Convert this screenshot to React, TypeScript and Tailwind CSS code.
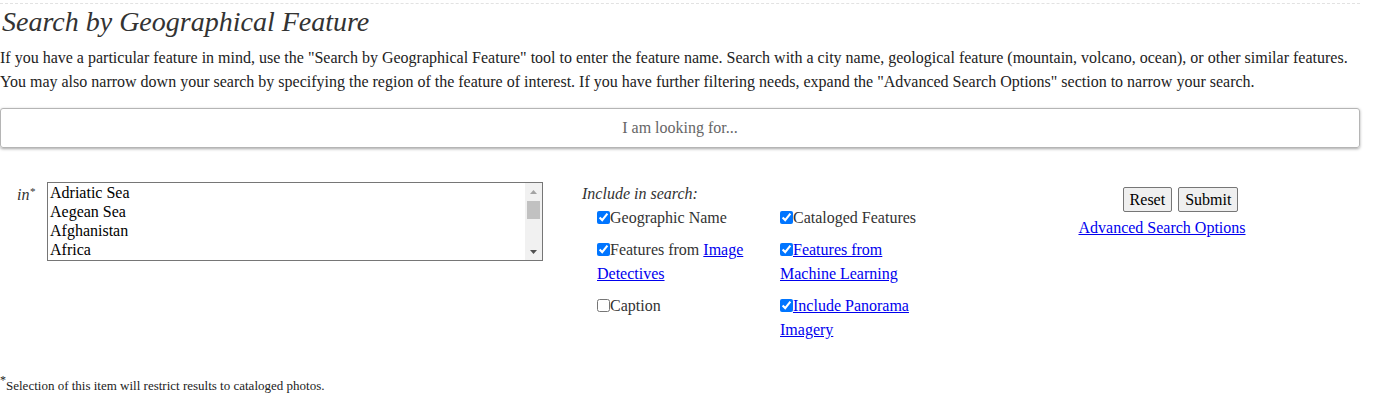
import { useState } from 'react';

const regions = ['Adriatic Sea', 'Aegean Sea', 'Afghanistan', 'Africa'];

function Check({
  checked,
  children,
}: {
  checked: boolean;
  children: React.ReactNode;
}) {
  const [on, setOn] = useState(checked);
  return (
    <label className="block w-[160px] leading-[24px]">
      <input
        type="checkbox"
        checked={on}
        onChange={() => setOn(!on)}
        className="m-0 h-[13px] w-[13px] align-[-1px]"
      />
      {children}
    </label>
  );
}

// list box with a classic windows-style scrollbar
function RegionList() {
  const [sel, setSel] = useState<string | null>(null);
  return (
    <div
      role="listbox"
      className="flex h-[79px] w-[496px] border border-[#767676] bg-white text-[16px] text-black"
    >
      <div className="flex-1 overflow-hidden">
        {regions.map((r) => (
          <div
            key={r}
            role="option"
            onClick={() => setSel(r)}
            className={`h-[19px] px-[2px] leading-[19px] ${sel === r ? 'bg-[#cecece]' : ''}`}
          >
            {r}
          </div>
        ))}
      </div>
      <div className="flex w-[17px] flex-col bg-[#f1f1f1]">
        <div className="flex h-[17px] items-center justify-center">
          <svg width="7" height="4" viewBox="0 0 7 4">
            <path d="M3.5 0 L7 4 L0 4 Z" fill="#a3a3a3" />
          </svg>
        </div>
        <div className="mx-[2px] mt-[1px] h-[18px] bg-[#c1c1c1]" />
        <div className="flex-1" />
        <div className="flex h-[17px] items-center justify-center">
          <svg width="7" height="4" viewBox="0 0 7 4">
            <path d="M0 0 L7 0 L3.5 4 Z" fill="#505050" />
          </svg>
        </div>
      </div>
    </div>
  );
}

export default function App() {
  return (
    <div className="w-[1360px] font-['Liberation_Serif',serif] text-[#222]">
      <div className="mt-[3px] border-t border-dashed border-[#e2e2e2]" />
      <h2 className="mt-[1px] pl-[2px] text-[28px] italic leading-[34px] text-[#333]">
        Search by Geographical Feature
      </h2>
      <p className="mt-[7px] text-[16px] leading-[24px] text-[#222]">
        If you have a particular feature in mind, use the "Search by Geographical Feature" tool to
        enter the feature name. Search with a city name, geological feature (mountain, volcano,
        ocean), or other similar features. You may also narrow down your search by specifying the
        region of the feature of interest. If you have further filtering needs, expand the "Advanced
        Search Options" section to narrow your search.
      </p>

      <input
        type="text"
        placeholder="I am looking for..."
        className="mt-[14px] block h-[40px] w-full rounded-[3px] border border-[#b5b5b5] text-center text-[16px] text-[#333] shadow-[0_1px_3px_rgba(0,0,0,0.35)] outline-none placeholder:text-[#666]"
      />

      <div className="mt-[34px] flex items-start">
        <div className="w-[47px] pl-[17px] pt-[1px] text-[16px] italic leading-[24px] text-[#333]">
          in<sup className="text-[11px]">*</sup>
        </div>
        <RegionList />

        <div className="ml-[39px] pt-[2px] text-[16px]">
          <div className="mb-[2px] italic leading-[20px] text-[#333]">Include in search:</div>
          <div className="ml-[15px] grid grid-cols-[183px_160px] gap-y-[8px] text-[#333]">
            <Check checked>Geographic Name</Check>
            <Check checked>Cataloged Features</Check>
            <Check checked>
              Features from{' '}
              <a href="#" className="text-[#0000ee] underline">
                Image Detectives
              </a>
            </Check>
            <Check checked>
              <a href="#" className="text-[#0000ee] underline">
                Features from Machine Learning
              </a>
            </Check>
            <Check checked={false}>Caption</Check>
            <Check checked>
              <a href="#" className="text-[#0000ee] underline">
                Include Panorama Imagery
              </a>
            </Check>
          </div>
        </div>

        <div className="ml-[137px] flex w-[170px] flex-col items-center pt-[5px] text-[16px]">
          <div className="ml-[37px] flex gap-[6px]">
            <button className="h-[25px] rounded-[2px] border border-[#767676] bg-[#efefef] px-[6px] leading-[20px] text-black">
              Reset
            </button>
            <button className="h-[25px] rounded-[2px] border border-[#767676] bg-[#efefef] px-[6px] leading-[20px] text-black">
              Submit
            </button>
          </div>
          <a href="#" className="mt-[4px] leading-[24px] text-[#0000ee] underline">
            Advanced Search Options
          </a>
        </div>
      </div>

      <p className="mt-[34px] text-[13px] text-[#222]">
        <sup className="text-[12px]">*</sup>Selection of this item will restrict results to cataloged photos.
      </p>
    </div>
  );
}
